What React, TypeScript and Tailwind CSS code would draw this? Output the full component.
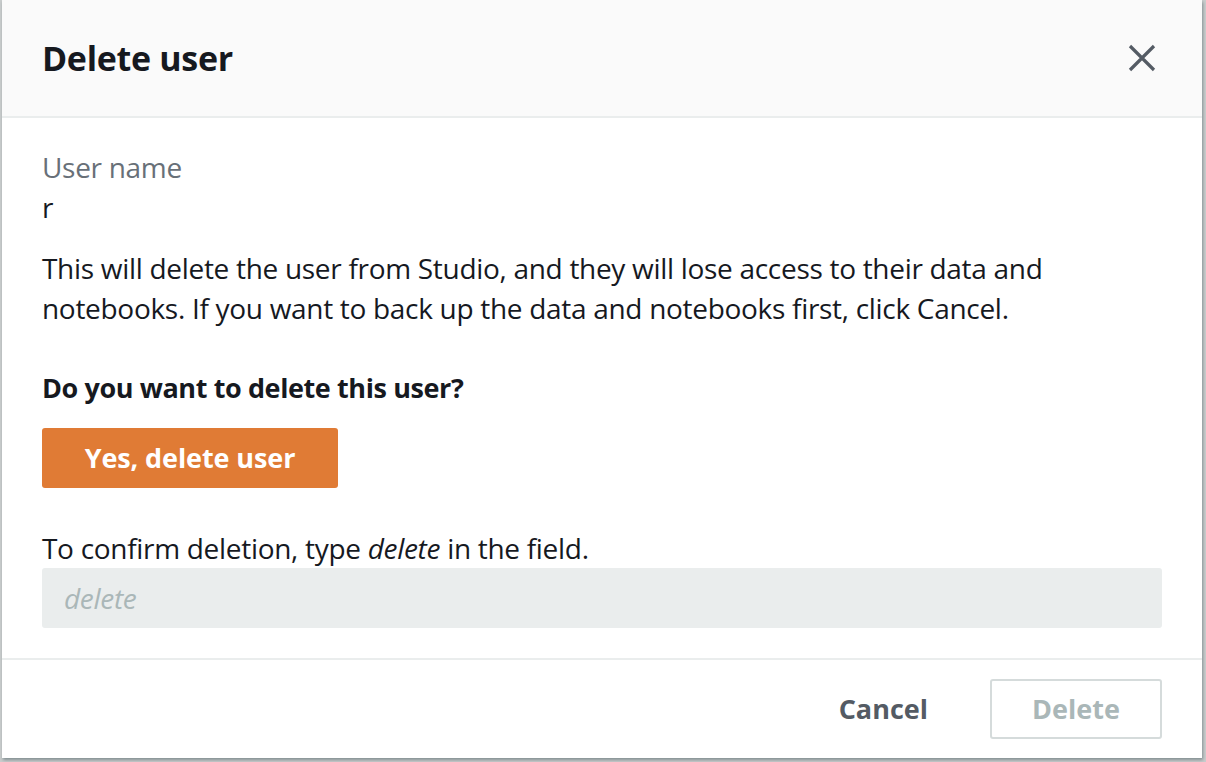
import { useState } from 'react';

const font = { fontFamily: '"Open Sans", "Noto Sans", sans-serif' };

export default function App() {
    const [confirmText, setConfirmText] = useState('');
    const canDelete = confirmText === 'delete';

    return (
        <div className="w-[1206px] h-[762px] bg-[#c9cdcd] overflow-hidden" style={font}>
            <div className="ml-[2px] w-[1200px] h-[758px] bg-white flex flex-col shadow-[1px_2px_3px_rgba(0,28,36,0.35)]">
                {/* Header */}
                <div className="h-[118px] bg-[#fafafa] border-b-2 border-[#eaeded] flex items-center justify-between pl-[40px] pr-[46px]">
                    <h1 className="text-[34px] font-bold text-[#16191f] leading-none tracking-[-0.3px]">Delete user</h1>
                    <button className="text-[#545b64]" aria-label="Close">
                        <svg width="28" height="28" viewBox="0 0 28 28" fill="none">
                            <path d="M2 2L26 26M26 2L2 26" stroke="currentColor" strokeWidth="3.2" />
                        </svg>
                    </button>
                </div>

                {/* Body */}
                <div className="flex-1 pl-[40px] pr-[40px] pt-[29px] text-[28px] text-[#16191f] tracking-[-0.3px]">
                    <div className="text-[#687078] leading-[40px]">User name</div>
                    <div className="leading-[40px]">r</div>

                    <p className="mt-[21px] leading-[40px]">
                        This will delete the user from Studio, and they will lose access to their data and
                        <br />
                        notebooks. If you want to back up the data and notebooks first, click Cancel.
                    </p>

                    <div className="mt-[40px] text-[27px] font-bold leading-[40px] tracking-[-0.4px]">
                        Do you want to delete this user?
                    </div>

                    <button className="mt-[20px] block w-[296px] h-[60px] rounded-[3px] bg-[#e07b35] text-white font-bold text-[27px] tracking-[-0.1px]">
                        Yes, delete user
                    </button>

                    <div className="mt-[40px] leading-[40px]">
                        To confirm deletion, type <i>delete</i> in the field.
                    </div>

                    <input
                        value={confirmText}
                        onChange={e => setConfirmText(e.target.value)}
                        placeholder="delete"
                        className="block w-full h-[60px] rounded-[3px] bg-[#eaeded] px-[22px] text-[28px] italic placeholder:text-[#aab7b8] outline-none"
                    />
                </div>

                {/* Footer */}
                <div className="h-[100px] border-t-2 border-[#eaeded] flex items-center justify-end gap-[62px] pr-[40px]">
                    <button className="text-[27px] font-bold text-[#545b64]">Cancel</button>
                    <button
                        disabled={!canDelete}
                        className="w-[172px] h-[60px] rounded-[3px] border-2 border-[#d5dbdb] text-[27px] font-bold text-[#aab7b8]"
                    >
                        Delete
                    </button>
                </div>
            </div>
        </div>
    );
}
